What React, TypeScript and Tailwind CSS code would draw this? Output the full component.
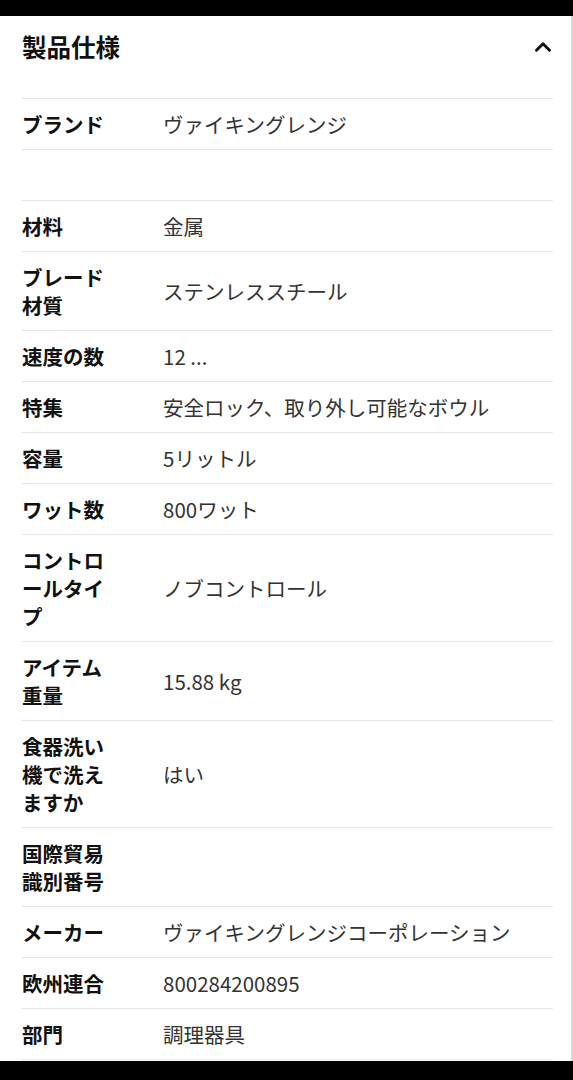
import { ChevronUp } from 'lucide-react';

type Spec = { label: string; value: string };

// 製品仕様のリスト（空欄の行もそのまま残す）
const specs: Spec[] = [
  { label: 'ブランド', value: 'ヴァイキングレンジ' },
  { label: '', value: '' },
  { label: '材料', value: '金属' },
  { label: 'ブレード材質', value: 'ステンレススチール' },
  { label: '速度の数', value: '12 ...' },
  { label: '特集', value: '安全ロック、取り外し可能なボウル' },
  { label: '容量', value: '5リットル' },
  { label: 'ワット数', value: '800ワット' },
  { label: 'コントロールタイプ', value: 'ノブコントロール' },
  { label: 'アイテム重量', value: '15.88 kg' },
  { label: '食器洗い機で洗えますか', value: 'はい' },
  { label: '国際貿易識別番号', value: '' },
  { label: 'メーカー', value: 'ヴァイキングレンジコーポレーション' },
  { label: '欧州連合', value: '800284200895' },
  { label: '部門', value: '調理器具' },
];

export default function App() {
  return (
    <div
      className="w-[573px] h-[1080px] bg-black overflow-hidden"
      style={{ fontFamily: '"Noto Sans CJK JP", "Noto Sans", sans-serif' }}
    >
      <div className="h-4" />
      <div className="bg-white border-r-2 border-[#d8d8d8] pl-[22px] pr-[18px] pb-[1px]">
        {/* 見出し */}
        <div className="flex items-center justify-between h-[62px] mb-5">
          <h2 className="text-[24.5px] font-bold text-[#111] leading-8">製品仕様</h2>
          <ChevronUp className="w-[26px] h-[26px] text-[#111] -mr-[3px]" strokeWidth={2.75} />
        </div>

        {/* 仕様テーブル */}
        <div className="border-t border-[#e6e6e6]">
          {specs.map((s, i) => (
            <div
              key={i}
              className="flex items-center py-[11px] border-b border-[#e6e6e6] text-[20.5px] leading-[28px]"
            >
              <div className="w-[92px] mr-[49px] shrink-0 font-bold text-[#111] [line-break:anywhere]">
                {s.label || '\u00a0'}
              </div>
              <div className="flex-1 text-[#333]">{s.value || '\u00a0'}</div>
            </div>
          ))}
        </div>
      </div>
    </div>
  );
}
